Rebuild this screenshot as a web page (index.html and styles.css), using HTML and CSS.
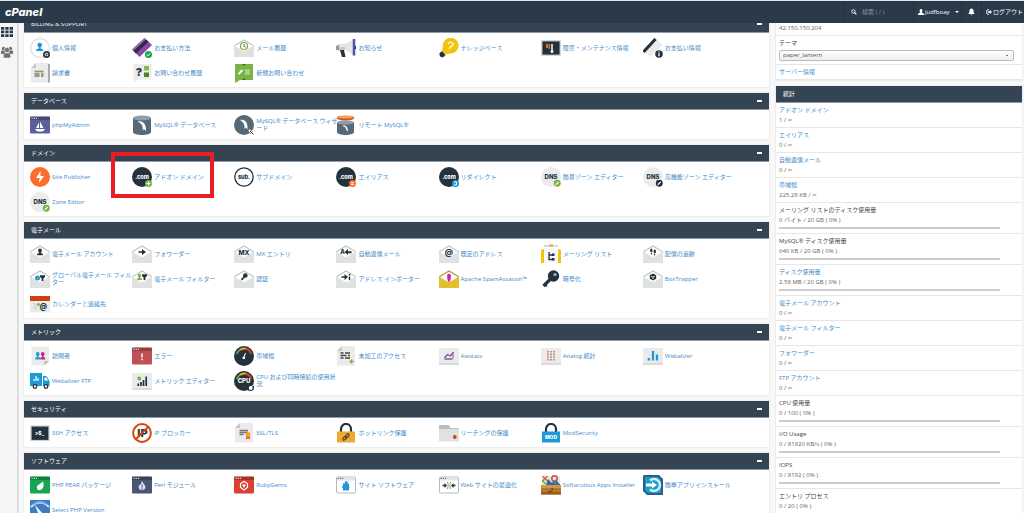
FILE: index.html
```html
<!DOCTYPE html>
<html lang="ja">
<head>
<meta charset="utf-8">
<title>cPanel</title>
<link rel="stylesheet" href="styles.css">
</head>
<body>
<svg class="defs" aria-hidden="true">
  <symbol id="env" viewBox="0 0 20 20">
    <path d="M.7 7.500 10 2l9.300 5.500V14H.7z" fill="#fff" stroke="#c3c5c4" stroke-width="1.200"/>
    <path d="M0 7.500 10 13.500 20 7.500V19H0z" fill="#e0e2e1"/>
  </symbol>
  <symbol id="page" viewBox="0 0 20 20">
    <path d="M6 0h13v19.500H1V5z" fill="#ebebeb"/><path d="M6 0v5H1z" fill="#c6c6c6"/>
  </symbol>
  <symbol id="disc" viewBox="0 0 20 20">
    <circle cx="10" cy="10" r="10"/>
  </symbol>
  <symbol id="pencil" viewBox="0 0 8 8">
    <circle cx="4" cy="4" r="3.700"/><path d="M2.400 5.600 5.500 2.500" stroke="#fff" stroke-width="1.300"/>
  </symbol>
  <symbol id="win" viewBox="0 0 20 20">
    <rect y="1.500" width="20" height="17" rx="1"/>
    <path d="M0 5h20V2.500a1 1 0 0 0-1-1H1a1 1 0 0 0-1 1z" fill="#000" opacity=".22"/>
    <path d="M1.500 3.300h6" stroke="#fff" stroke-width="1" stroke-dasharray="1.200 1"/>
  </symbol>
  <symbol id="tile" viewBox="0 0 20 20">
    <rect y="2" width="20" height="16.500" fill="#ebebeb"/><path d="M0 18h20" stroke="#cfcfcf" stroke-width="1.200"/>
  </symbol>
  <symbol id="gauge" viewBox="0 0 20 20">
    <circle cx="10" cy="10" r="10" fill="#24323d"/>
    <g fill="none" stroke-width="2"><path d="M2.800 8a7.500 7.500 0 0 1 3-4" stroke="#6a9d4c"/><path d="M5.800 4a7.500 7.500 0 0 1 6-1.300" stroke="#f0b12f"/><path d="M11.800 2.700A7.500 7.500 0 0 1 17.200 8" stroke="#d8420f"/></g>
  </symbol>
  <symbol id="db" viewBox="0 0 20 20">
    <path d="M1 3v14c0 4 18 4 18 0V3z" fill="#566976"/><ellipse cx="10" cy="3" rx="9" ry="2.600" fill="#8ba0ae"/>
    <path d="M5.500 6.500c5-1.500 9 2 8.500 9.500l-2-2-1.500 1.500c1-4-1-7.500-5-9z" fill="#fff"/>
  </symbol>
</svg>

<header class="topbar">
  <a class="logo" href="#">cPanel</a>
  <label class="search">
    <svg viewBox="0 0 10 10"><circle cx="4" cy="4" r="2.800" fill="none" stroke="#fff" stroke-width="1.500"/><path d="m6 6 3 3" stroke="#fff" stroke-width="1.800"/></svg>
    <input type="text" placeholder="検索 ( / )" aria-label="検索">
  </label>
  <button class="top-btn user"><svg viewBox="0 0 10 10"><path d="M5 0a2.500 2.800 0 0 1 1.500 5v1L10 8v2H0V8l3.500-2V5A2.500 2.800 0 0 1 5 0z"/></svg>judfboay<span class="caret"></span></button>
  <button class="top-btn bell" aria-label="通知"><svg viewBox="0 0 10 10"><path d="M5 0c3 .5 3 3 3 4.500C8 6 9 7 10 8H0c1-1 2-2 2-3.500C2 3 2 .5 5 0zM3.800 8.500h2.400L5 10z"/></svg></button>
  <a class="top-btn logout" href="#"><svg viewBox="0 0 10 10"><path d="M5 1.300H3.200A2 2 0 0 0 1.200 3.300v3.400a2 2 0 0 0 2 2H5" fill="none" stroke="#fff" stroke-width="1.500"/><path d="M3.500 3.700h3V1.500L10 5 6.500 8.500V6.300h-3z"/></svg>ログアウト</a>
</header>

<div class="shell">
  <nav class="rail">
    <a href="#" aria-label="ホーム"><svg viewBox="0 0 12 10"><path fill="#293a4a" d="M0 0h3.300v2.700H0zM4.300 0h3.300v2.700H4.300zM8.600 0H12v2.700H8.600zM0 3.600h3.300v2.700H0zM4.300 3.600h3.300v2.700H4.300zM8.600 3.600H12v2.700H8.600zM0 7.200h3.300V10H0zM4.300 7.200h3.300V10H4.300zM8.600 7.200H12V10H8.600z"/></svg></a>
    <a href="#" aria-label="ユーザー"><svg class="users" viewBox="0 0 12 12"><g fill="#707070"><circle cx="2.500" cy="2.500" r="1.700"/><circle cx="9.500" cy="2.500" r="1.700"/><path d="M0 8V5.500Q0 4.500 1 4.500h3V8zM8 8V4.500h3q1 0 1 1V8z"/></g><circle cx="6" cy="4" r="2.600" fill="#707070" stroke="#f5f5f5" stroke-width=".6"/><path d="M2.400 12V9q0-2 2-2h3.200q2 0 2 2v3z" fill="#707070" stroke="#f5f5f5" stroke-width=".5"/></svg></a>
  </nav>

  <main class="content">
    <div class="panels">
      <section class="panel">
        <h2>BILLING &amp; SUPPORT<button aria-label="折りたたむ"></button></h2>
        <div class="items">
          <a class="item" href="#"><svg viewBox="0 0 20 20"><circle cx="10" cy="10" r="9.300" fill="#fff" stroke="#ddd" stroke-width="1.200"/><circle cx="9.700" cy="7" r="2.300" fill="#1c9ad6"/><path d="M8.700 8h2v2.500l2.500 1V13H6.200v-1.500l2.500-1z" fill="#1c9ad6"/><circle cx="16.500" cy="16.500" r="3.500" fill="#24323d"/><circle cx="16.500" cy="16.500" r="1.300" fill="none" stroke="#fff"/></svg><span>個人情報</span></a>
          <a class="item" href="#"><svg viewBox="0 0 20 20"><path d="M0 11.500 12.500 0 20 7 7.500 19z" fill="#8c46a8"/><path d="M0 11.500 12.500 0l1 1L1 12.500z" fill="#a96ac0"/><path d="M1.500 13 14 1.500l2.500 2.300L4 15.500z" fill="#24323d"/><circle cx="16.500" cy="16.500" r="3.500" fill="#17a650"/><path d="m14.800 16.500 1.300 1.300 2-2.400" fill="none" stroke="#fff"/></svg><span>お支払い方法</span></a>
          <a class="item" href="#"><svg viewBox="0 0 20 20"><use href="#env"/><circle cx="10" cy="8" r="3.500" fill="#fff" stroke="#79ab45" stroke-width="1.200"/><path d="M10 6v2.300l1.700.7" fill="none" stroke="#4f7a2b"/></svg><span>メール履歴</span></a>
          <a class="item" href="#"><svg viewBox="0 0 20 20"><path d="M0 8 4 6v6.500L0 12z" fill="#999"/><path d="M3 6h6l8-4.500v15L9 12H3z" fill="#e5e5e5"/><path d="M3 9h6v3H3z" fill="#c9c9c9"/><path d="M4 12h4l1.500 7H6z" fill="#24323d"/><path d="M18 1v16.500" stroke="#4655ae" stroke-width="2.500"/><path d="M19.500 8v3" stroke="#24323d"/></svg><span>お知らせ</span></a>
          <a class="item" href="#"><svg viewBox="0 0 20 20"><path d="M6.500 16.500 3 12.500c1-2.500.5-4.500 1.200-7A7.800 7.800 0 1 1 14 15c-3 1-5 .3-7.500 1.500z" fill="#f2c40f"/><path d="M3 13 6.500 17l-2.500 2.500L1 18.500.3 15.500z" fill="#24323d"/><path d="M9 5.500q3-2.500 5 0 .8 2-2 3L10 11" fill="none" stroke="#fff2b0" stroke-width="1.700"/></svg><span>ナレッジベース</span></a>
          <a class="item" href="#"><svg viewBox="0 0 20 20"><rect x=".7" y="2.700" width="18.600" height="14.600" fill="#24323d" stroke="#d6d6d6" stroke-width="1.400"/><path d="M6 6v4" stroke="#e66c29" stroke-width="2"/><path d="M8.200 6v5" stroke="#f0b12f"/><path d="M11 6v7" stroke="#fff" stroke-width="1.500"/><circle cx="11" cy="13.500" r="1.500" fill="#fff"/></svg><span>障害・メンテナンス情報</span></a>
          <a class="item" href="#"><svg viewBox="0 0 20 20"><path d="M0 12 12 0l7.500 6.500L7.500 19z" fill="#ebebeb"/><path d="m.5 14 12-13" stroke="#24323d" stroke-width="3"/><circle cx="16" cy="16" r="3.800" fill="#24323d"/><path d="M16 13.500v1M16 15.300v3" stroke="#fff" stroke-width="1.300"/></svg><span>お支払い情報</span></a>
          <a class="item" href="#"><svg viewBox="0 0 20 20"><use href="#page"/><path d="M18 1h2v18.500h-2z" fill="#aaa"/><path d="M4.500 8.500h9" stroke="#79ab45" stroke-width="1.700"/><path d="M4.500 11h5M4.500 13h5M11 11h2.500M11 13h2.500" stroke="#444" stroke-width="1.200"/></svg><span>請求書</span></a>
          <a class="item" href="#"><svg viewBox="0 0 20 20"><path d="M1.500 1h18v15.500H6L1.500 20z" fill="#ebebeb"/><text x="7" y="12.500" class="glyph" fill="#24323d" font-size="11">?</text><path d="M12 3h5v4.500h-5z" fill="#86ba50"/><path d="M12 9.500h5V14h-5z" fill="#4e8420"/></svg><span>お問い合わせ履歴</span></a>
          <a class="item" href="#"><svg viewBox="0 0 20 20"><path d="M1 1h18v16H6l-5 3z" fill="#79b446"/><path d="M8 1h4l-2 2zM8 17h4l-2-2z" fill="#3f741d"/><path d="m4.500 11 4-4" stroke="#fff" stroke-width="1.800"/><path d="M11 7h5M11 9h5M11 11h5" stroke="#d4ebbf"/></svg><span>新規お問い合わせ</span></a>
        </div>
      </section>

      <section class="panel">
        <h2>データベース<button aria-label="折りたたむ"></button></h2>
        <div class="items">
          <a class="item" href="#"><svg viewBox="0 0 20 20"><use href="#win" fill="#5c5f99"/><path d="M9 7.500V13H6zM10 6.500l3.500 6.500H10zM5 14h10l-2 2.500H7z" fill="#fff"/></svg><span>phpMyAdmin</span></a>
          <a class="item" href="#"><svg viewBox="0 0 20 20"><use href="#db"/></svg><span>MySQL® データベース</span></a>
          <a class="item" href="#"><svg viewBox="0 0 20 20"><circle cx="10" cy="10" r="10" fill="#566976"/><path d="M6 5c5-1.500 8 2 7.500 9.500l-1.700-2-1.500 1.500c1-4-1-7-4.300-9z" fill="#fff"/><path d="m15 15 5 5M19.500 15.500l-3 3" stroke="#fff" stroke-width="2.200"/><path d="m16 16 3.500 3.500M18.500 16.500l-2 2" stroke="#24323d"/></svg><span>MySQL® データベース ウィザード</span></a>
          <a class="item" href="#"><svg viewBox="0 0 20 20"><path d="M1 7v10c0 4 17 4 17 0V7z" fill="#566976"/><ellipse cx="9.500" cy="7.500" rx="8.500" ry="2.200" fill="#8ba0ae"/><ellipse cx="9.500" cy="3" rx="8.700" ry="2.300" fill="#dc4c18"/><ellipse cx="9.500" cy="2" rx="8.700" ry="1.600" fill="#f2a356"/><path d="M7 10.500c3-.3 5 1.500 5 6l-2-2c0-2-1-3-3-3z" fill="#fff"/></svg><span>リモート MySQL®</span></a>
        </div>
      </section>

      <section class="panel">
        <h2>ドメイン<button aria-label="折りたたむ"></button></h2>
        <div class="items">
          <a class="item" href="#"><svg viewBox="0 0 20 20"><circle cx="10" cy="10" r="10" fill="#ff6c2c"/><path d="m10.500 4-4.500 7h3.500L9 16l5-7h-3.500z" fill="#fff"/></svg><span>Site Publisher</span></a>
          <a class="item marked" href="#"><svg viewBox="0 0 20 20"><use href="#disc" fill="#24323d"/><text x="10" y="11.800" class="glyph" fill="#fff" font-size="5.500">.com</text><circle cx="16.500" cy="16.500" r="3.500" fill="#7cb342"/><path d="M16.500 14.500v4M14.500 16.500h4" stroke="#fff"/></svg><span>アドオン ドメイン</span></a>
          <a class="item" href="#"><svg viewBox="0 0 20 20"><circle cx="10" cy="10" r="9.200" fill="#fff" stroke="#24323d" stroke-width="1.300"/><text x="10" y="12" class="glyph" fill="#24323d" font-size="5.500">sub.</text></svg><span>サブドメイン</span></a>
          <a class="item" href="#"><svg viewBox="0 0 20 20"><use href="#disc" fill="#24323d"/><text x="10" y="11.800" class="glyph" fill="#fff" font-size="5.500">.com</text><circle cx="16.500" cy="16.500" r="3.500" fill="#ff6c2c"/><path d="M15 15.700h3M15 17.400h3" stroke="#fff"/></svg><span>エイリアス</span></a>
          <a class="item" href="#"><svg viewBox="0 0 20 20"><use href="#disc" fill="#24323d"/><text x="10" y="11.800" class="glyph" fill="#fff" font-size="5.500">.com</text><circle cx="16.500" cy="16.500" r="3.500" fill="#1c9ad6"/><path d="M15 15h2.500v3H15" fill="none" stroke="#fff"/></svg><span>リダイレクト</span></a>
          <a class="item" href="#"><svg viewBox="0 0 20 20"><use href="#disc" fill="#ebebeb"/><text x="10" y="12" class="glyph" fill="#24323d" font-size="6">DNS</text><use href="#pencil" x="12.500" y="12.500" width="7.500" height="7.500" fill="#7cb342"/></svg><span>簡易ゾーン エディター</span></a>
          <a class="item" href="#"><svg viewBox="0 0 20 20"><use href="#disc" fill="#ebebeb"/><text x="10" y="12" class="glyph" fill="#24323d" font-size="6">DNS</text><use href="#pencil" x="12.500" y="12.500" width="7.500" height="7.500" fill="#24323d"/></svg><span>高機能ゾーン エディター</span></a>
          <a class="item" href="#"><svg viewBox="0 0 20 20"><use href="#disc" fill="#ebebeb"/><text x="10" y="12" class="glyph" fill="#24323d" font-size="6">DNS</text><use href="#pencil" x="12.500" y="12.500" width="7.500" height="7.500" fill="#7cb342"/></svg><span>Zone Editor</span></a>
        </div>
      </section>

      <section class="panel">
        <h2>電子メール<button aria-label="折りたたむ"></button></h2>
        <div class="items">
          <a class="item" href="#"><svg viewBox="0 0 20 20"><use href="#env"/><circle cx="10" cy="6.500" r="1.900" fill="#24323d"/><path d="M9 7h2v2l1.800.7v1.500H7.200V9.700L9 9z" fill="#24323d"/></svg><span>電子メール アカウント</span></a>
          <a class="item" href="#"><svg viewBox="0 0 20 20"><use href="#env"/><path d="M6.500 7.200H10V5l4 3-4 3V8.800H6.500z" fill="#24323d"/></svg><span>フォワーダー</span></a>
          <a class="item" href="#"><svg viewBox="0 0 20 20"><use href="#env"/><text x="10" y="10.500" class="glyph" fill="#24323d" font-size="6.500">MX</text></svg><span>MX エントリ</span></a>
          <a class="item" href="#"><svg viewBox="0 0 20 20"><use href="#env"/><text x="6.500" y="10.200" class="glyph" fill="#24323d" font-size="6">A</text><path d="m8.500 8 3.500-3v2.200h3.500v2H12V11z" fill="#24323d"/></svg><span>自動返信メール</span></a>
          <a class="item" href="#"><svg viewBox="0 0 20 20"><use href="#env"/><text x="10" y="10.500" class="glyph" fill="#24323d" font-size="8">@</text></svg><span>既定のアドレス</span></a>
          <a class="item" href="#"><svg viewBox="0 0 20 20"><path d="M0 7q0-2 3-2v14H0zM17 5q3 0 3 2v12h-3z" fill="#f2c40f"/><path d="M3 2h14" stroke="#ccc" stroke-width="1.500"/><path d="M8 1.500h4" stroke="#f0a42f" stroke-width="2"/><path d="M3 4h14v15H3z" fill="#f7f7f7"/><path d="M8 8v7.500h4M8 11h4" fill="none" stroke="#24323d" stroke-width="1.300"/><path d="M11 9.500h2.500v2.500H11zM11 14h2.500v2.500H11z" fill="#24323d"/></svg><span>メーリング リスト</span></a>
          <a class="item" href="#"><svg viewBox="0 0 20 20"><use href="#env"/><ellipse cx="8.300" cy="6.500" rx="1.200" ry="2" fill="#24323d"/><circle cx="8.500" cy="9.700" r=".8" fill="#24323d"/><ellipse cx="11.800" cy="7.500" rx="1.200" ry="2" fill="#24323d"/><circle cx="11.500" cy="10.700" r=".8" fill="#24323d"/></svg><span>配信の追跡</span></a>
          <a class="item" href="#"><svg viewBox="0 0 20 20"><use href="#env"/><circle cx="7.500" cy="9" r="2.500" fill="#1c9ad6"/><path d="M6.500 8q1.500-1 2 1l-1 2z" fill="#79b446"/><path d="M10 6.300h5V8l-1.600 1.500V12h-1.800V9.500L10 8z" fill="#24323d"/></svg><span>グローバル電子メール フィルター</span></a>
          <a class="item" href="#"><svg viewBox="0 0 20 20"><use href="#env"/><circle cx="7.500" cy="6.500" r="1.700" fill="#79b446"/><path d="M6.700 7h1.600v2l1.500.6V11H5.200V9.600L6.700 9z" fill="#79b446"/><path d="M10 5.300h5V7l-1.600 1.500V11h-1.800V8.500L10 7z" fill="#24323d"/></svg><span>電子メール フィルター</span></a>
          <a class="item" href="#"><svg viewBox="0 0 20 20"><use href="#env"/><circle cx="11.300" cy="6.500" r="2.300" fill="#24323d"/><path d="M10.500 7.500 7.500 11" stroke="#24323d" stroke-width="1.700"/></svg><span>認証</span></a>
          <a class="item" href="#"><svg viewBox="0 0 20 20"><use href="#env"/><path d="M5.500 7.200h3V5l3.500 3-3.500 3V8.800h-3z" fill="#24323d"/><path d="M13.500 5v1.500M13.500 7.500V11" stroke="#24323d" stroke-width="1.500"/></svg><span>アドレス インポーター</span></a>
          <a class="item" href="#"><svg viewBox="0 0 20 20"><path d="M.7 7.500 10 2l9.300 5.500V14H.7z" fill="#fff" stroke="#b5903a" stroke-width="1.200"/><path d="M0 7.500 10 13.500 20 7.500V19H0z" fill="#e2c02d"/><path d="m10 4.500 2 1.500-.5 5L10 13.500 8.500 11 8 6z" fill="#d6209b"/></svg><span>Apache SpamAssassin™</span></a>
          <a class="item" href="#"><svg viewBox="0 0 20 20"><circle cx="12.500" cy="7" r="5.700" fill="#24323d"/><circle cx="14" cy="5.500" r="1.600" fill="#aeb5ba"/><path d="m9.500 10-7 7" stroke="#24323d" stroke-width="3.200"/><path d="m4 15.500 2 2" stroke="#24323d" stroke-width="1.500"/></svg><span>暗号化</span></a>
          <a class="item" href="#"><svg viewBox="0 0 20 20"><use href="#env"/><path d="m10 4.500 3.200 1.800v3.500L10 11.600 6.800 9.800V6.300z" fill="#24323d"/><path d="m8 7.200 2 1 2-1M10 8.200v2" fill="none" stroke="#fff" stroke-width=".8"/></svg><span>BoxTrapper</span></a>
          <a class="item" href="#"><svg viewBox="0 0 20 20"><path d="M0 2h20v5H0z" fill="#cb420f"/><path d="M0 7h20v11.500H0z" fill="#ebebeb"/><path d="M4 9v7M6 10v6" stroke="#bbb" stroke-dasharray="1.300 1"/><circle cx="8.500" cy="10.500" r="1.500" fill="#79b446"/><text x="13.500" y="15" class="glyph" fill="#24323d" font-size="7">@</text></svg><span>カレンダーと連絡先</span></a>
        </div>
      </section>

      <section class="panel">
        <h2>メトリック<button aria-label="折りたたむ"></button></h2>
        <div class="items">
          <a class="item" href="#"><svg viewBox="0 0 20 20"><path d="M1.500.5H19V15l-4.500 4.500h-13z" fill="#ebebeb"/><path d="M14.500 19.500V15H19z" fill="#bbb"/><g fill="#1c9ad6"><circle cx="7.700" cy="8" r="1.900"/><path d="M7 9h1.500v2l1.700.7V13.500H5.300v-1.800L7 11z"/></g><g fill="#c8248c"><circle cx="12.700" cy="8" r="1.900"/><path d="M12 9h1.500v2l1.700.7V13.500h-4.900v-1.800L12 11z"/></g></svg><span>訪問者</span></a>
          <a class="item" href="#"><svg viewBox="0 0 20 20"><use href="#win" fill="#bf5053"/><path d="M10 7.500v4M10 12.800v1.500" stroke="#fff" stroke-width="1.500"/></svg><span>エラー</span></a>
          <a class="item" href="#"><svg viewBox="0 0 20 20"><use href="#gauge"/><circle cx="9.800" cy="11.800" r="1.400" fill="#fff"/><path d="m9.800 12 1.700-5" stroke="#fff"/></svg><span>帯域幅</span></a>
          <a class="item" href="#"><svg viewBox="0 0 20 20"><use href="#page"/><path d="M4.500 7h3M9 7h5M4.500 9.500h6M12 9.500h2M4.500 12h3M9 12h5" stroke="#444" stroke-width="1.300"/><path d="M15.500 13.500v4M13.500 15.500h4" stroke="#79b446" stroke-width="1.700"/></svg><span>未加工のアクセス</span></a>
          <a class="item" href="#"><svg viewBox="0 0 20 20"><use href="#tile"/><path d="M5.500 13h8" stroke="#24323d"/><path d="m5.500 12 3-3.500 3 1.500 3-4" fill="none" stroke="#8e3fa9" stroke-width="1.300"/><path d="M14 8v4.500" stroke="#8e3fa9"/></svg><span>Awstats</span></a>
          <a class="item" href="#"><svg viewBox="0 0 20 20"><use href="#tile"/><g fill="none" stroke-width="1.700" stroke-dasharray="1.600 1"><path d="M7 5v10" stroke="#ff6c2c"/><path d="M10 5v10" stroke="#58a7cf"/><path d="M13 5v10" stroke="#eb7750"/></g></svg><span>Analog 統計</span></a>
          <a class="item" href="#"><svg viewBox="0 0 20 20"><use href="#tile"/><path d="M5.800 12v2.500M10 5v9.500M14 8.500v6" stroke="#1c9ad6" stroke-width="2.300"/></svg><span>Webalizer</span></a>
          <a class="item" href="#"><svg viewBox="0 0 20 20"><path d="M0 2h12v13H0zM13 5h3.500L19.500 10v5H13z" fill="#1c9ad6"/><path d="M14.500 6.500h2l1.500 3h-3.500z" fill="#fff"/><path d="M4 8v2M6 5v5M8 7v3" stroke="#fff" stroke-width="1.200"/><circle cx="5" cy="15.500" r="1.800" fill="#fff" stroke="#24323d" stroke-width="1.300"/><circle cx="16" cy="15.500" r="1.800" fill="#fff" stroke="#24323d" stroke-width="1.300"/></svg><span>Webalizer FTP</span></a>
          <a class="item" href="#"><svg viewBox="0 0 20 20"><use href="#tile"/><circle cx="7.300" cy="7.500" r="2" fill="#79b446"/><path d="M6.300 12.500V15M9 11v4M11.500 9v6M14.200 5.500V15" stroke="#24323d" stroke-width="1.700"/></svg><span>メトリック エディター</span></a>
          <a class="item" href="#"><svg viewBox="0 0 20 20"><use href="#gauge"/><text x="10" y="12.300" class="glyph" fill="#fff" font-size="6">CPU</text><circle cx="16.500" cy="16.500" r="3.500" fill="#24323d"/><circle cx="16.700" cy="17" r="1.900" fill="#fff"/><path d="m17 16 2.500-2" stroke="#fff"/></svg><span>CPU および同時接続の使用状況</span></a>
        </div>
      </section>

      <section class="panel">
        <h2>セキュリティ<button aria-label="折りたたむ"></button></h2>
        <div class="items">
          <a class="item" href="#"><svg viewBox="0 0 20 20"><rect x="1" y="3" width="18" height="14.500" fill="#24323d" stroke="#d0d0d0" stroke-width="1.200"/><text x="9.500" y="12" class="glyph" fill="#fff" font-size="5">&gt;$_</text></svg><span>SSH アクセス</span></a>
          <a class="item" href="#"><svg viewBox="0 0 20 20"><text x="10.500" y="14" class="glyph" fill="#24323d" font-size="11">IP</text><circle cx="10" cy="10" r="8.900" fill="none" stroke="#d8480f" stroke-width="2"/><path d="M16 4 4 16" stroke="#d8480f" stroke-width="2"/></svg><span>IP ブロッカー</span></a>
          <a class="item" href="#"><svg viewBox="0 0 20 20"><use href="#page"/><path d="M5.500 7.500h8.500M5.500 9.500h8.500M5.500 11.500h4" stroke="#777" stroke-width="1.300"/><path d="M12 11h4v5.500l-2-1-2 1z" fill="#e8642b"/><circle cx="14" cy="11.500" r="2.400" fill="#f0a92f"/></svg><span>SSL/TLS</span></a>
          <a class="item" href="#"><svg viewBox="0 0 20 20"><path d="M5 10V6a5 5 0 0 1 10 0v4" fill="none" stroke="#24323d" stroke-width="2.200"/><path d="M1 8.500h18V19.500H1z" fill="#f0a92f"/><g fill="none" stroke="#24323d"><ellipse cx="8.700" cy="15.300" rx="1.300" ry="2.200" transform="rotate(45 8.700 15.300)"/><ellipse cx="11.300" cy="12.700" rx="1.300" ry="2.200" transform="rotate(45 11.300 12.700)"/></g></svg><span>ホットリンク保護</span></a>
          <a class="item" href="#"><svg viewBox="0 0 20 20"><path d="M0 2h10l1.500 3H20v5H0z" fill="#bdbdbd"/><path d="M0 6h20v12.500H0z" fill="#e0e2e1"/><circle cx="15.800" cy="14" r="1.900" fill="#d8420f"/></svg><span>リーチングの保護</span></a>
          <a class="item" href="#"><svg viewBox="0 0 20 20"><path d="M5 9V6a5 5 0 0 1 10 0v3" fill="none" stroke="#24323d" stroke-width="2.200"/><path d="M1 8.500h18V19.500H1z" fill="#1c9ad6"/><text x="10" y="15.800" class="glyph" fill="#fff" font-size="5">MOD</text></svg><span>ModSecurity</span></a>
        </div>
      </section>

      <section class="panel">
        <h2>ソフトウェア<button aria-label="折りたたむ"></button></h2>
        <div class="items">
          <a class="item" href="#"><svg viewBox="0 0 20 20"><use href="#win" fill="#17a650"/><path d="M13 6.500q1.500 4-.5 7-2.500 3-5 1-2-3 1.500-5z" fill="#fff"/></svg><span>PHP PEAR パッケージ</span></a>
          <a class="item" href="#"><svg viewBox="0 0 20 20"><use href="#win" fill="#485573"/><path d="M10 6q1 2 3 4.500 1.500 4-3 4.800Q5.500 14.500 7 10.500 9.500 9 10 6z" fill="#dce1ee"/><path d="M10 9v6" stroke="#485573" stroke-width=".8"/></svg><span>Perl モジュール</span></a>
          <a class="item" href="#"><svg viewBox="0 0 20 20"><use href="#win" fill="#d94032"/><path d="m10 6.500 3.500 2v4L10 15l-3.500-2.500v-4z" fill="none" stroke="#fff" stroke-width="1.200"/><path d="M8 9.500h4l-2 3.500z" fill="#fff"/></svg><span>RubyGems</span></a>
          <a class="item" href="#"><svg viewBox="0 0 20 20"><rect x=".5" y="2" width="19" height="16" rx="1" fill="#fff" stroke="#bbb"/><path d="M1 4h18" stroke="#e5e5e5" stroke-width="3"/><path d="M1.500 3.300h6" stroke="#444" stroke-dasharray="1.200 1"/><path d="M7 8.500h2a1.500 1.500 0 1 1 2.500 0H13v3a1.300 1.300 0 0 1 0 2V15.500H7v-2.500a1 1 0 0 1 0-2z" fill="#1c9ad6"/></svg><span>サイト ソフトウェア</span></a>
          <a class="item" href="#"><svg viewBox="0 0 20 20"><rect x=".5" y="2" width="19" height="16" rx="1" fill="#fff" stroke="#bbb"/><path d="M1 4h18" stroke="#e5e5e5" stroke-width="3"/><path d="M1.500 3.300h6" stroke="#444" stroke-dasharray="1.200 1"/><path d="M8.500 7q1.500 3.500 0 7M11.500 7q-1.500 3.500 0 7" fill="none" stroke="#79b446"/><path d="M3.500 10.500H7M16.500 10.500H13" stroke="#24323d" stroke-width="1.300"/><path d="m5.500 8 2.500 2.500L5.500 13zM14.500 8 12 10.500l2.500 2.500z" fill="#24323d"/></svg><span>Web サイトの最適化</span></a>
          <a class="item" href="#"><svg viewBox="0 0 20 20"><path d="M1 1h18v9H1z" fill="#dfe5ea"/><path d="m1.500 1 5 5M6.500 1l-5 5" stroke="#e06b32" stroke-width="1.600"/><path d="M1 5.500 5 9M16 4l-3 5" stroke="#7cae3a" stroke-width="1.500"/><circle cx="13.500" cy="3.500" r="2.700" fill="none" stroke="#d84e3d" stroke-width="1.500"/><path d="m5 10 2-6 4 4 2-3 1 5zM15 5l4.500 5H14z" fill="#2a6ba5"/><path d="M0 10h20v9.500H0z" fill="#b5752f"/><path d="M0 10h20v3H0z" fill="#d49545"/><path d="M0 17h20v2.500H0z" fill="#9a5d20"/><path d="M11 13q1 4-4 4" fill="none" stroke="#543212"/></svg><span>Softaculous Apps Installer</span></a>
          <a class="item" href="#"><svg viewBox="0 0 20 20"><path d="M1 0h15l4 4v16H4l-4-4V1z" fill="#2b5f8a"/><path d="M2 2h13l3 3v13H5l-3-3z" fill="#1a9cc4"/><path d="M7 5.500a6 6 0 1 1 0 9" fill="none" stroke="#c7f2fa" stroke-width="2.500"/><path d="M3 8.500h6V6.500l5 3.500-5 3.500v-2H3z" fill="#fff"/></svg><span>簡単アプリインストール</span></a>
          <a class="item" href="#"><svg viewBox="0 0 20 20"><path d="M0 0h20v20H0z" fill="#3e7dc4"/><path d="M1 7Q10-2 19 7" fill="none" stroke="#d9e8f7" stroke-width="1.800"/><path d="M3 4.500Q10-1 17 4.500" fill="none" stroke="#76a8dc" stroke-width="1.500"/><path d="m5 5 8 9-3 4z" fill="#fff"/></svg><span>Select PHP Version</span></a>
        </div>
      </section>
    </div>

    <aside class="side">
      <section class="card">
        <div class="row first">42.150.150.204</div>
        <div class="row theme"><label for="theme">テーマ</label><select id="theme"><option>paper_lantern</option></select></div>
        <div class="row"><a href="#">サーバー情報</a></div>
      </section>
      <section class="card stats">
        <h2>統計</h2>
        <div class="row"><a href="#">アドオン ドメイン</a><span>1 / ∞</span></div>
        <div class="row"><a href="#">エイリアス</a><span>0 / ∞</span></div>
        <div class="row"><a href="#">自動返信メール</a><span>0 / ∞</span></div>
        <div class="row"><a href="#">帯域幅</a><span>225.28 KB / ∞</span></div>
        <div class="row"><b>メーリング リストのディスク使用量</b><span>0 バイト / 20 GB ( 0% )</span><div class="meter"></div></div>
        <div class="row"><b>MySQL® ディスク使用量</b><span>640 KB / 20 GB ( 0% )</span><div class="meter"></div></div>
        <div class="row"><a href="#">ディスク使用量</a><span>2.58 MB / 20 GB ( 0% )</span><div class="meter"></div></div>
        <div class="row"><a href="#">電子メール アカウント</a><span>0 / ∞</span></div>
        <div class="row"><a href="#">電子メール フィルター</a><span>0 / ∞</span></div>
        <div class="row"><a href="#">フォワーダー</a><span>0 / ∞</span></div>
        <div class="row"><a href="#">FTP アカウント</a><span>0 / ∞</span></div>
        <div class="row"><b>CPU 使用量</b><span>0 / 100 ( 0% )</span><div class="meter"></div></div>
        <div class="row"><b>I/O Usage</b><span>0 / 81920 KB/s ( 0% )</span><div class="meter"></div></div>
        <div class="row"><b>IOPS</b><span>0 / 8192 ( 0% )</span><div class="meter"></div></div>
        <div class="row"><b>エントリ プロセス</b><span>0 / 20 ( 0% )</span><div class="meter"></div></div>
      </section>
    </aside>
  </main>
</div>
</body>
</html>
```
FILE: styles.css
```css
* {
  box-sizing: border-box;
}

body {
  margin: 0;
  height: 100vh;
  display: flex;
  flex-direction: column;
  overflow: hidden;
  background: #f8f8f8;
  color: #666;
  font: 6px/10px "Open Sans", "Noto Sans CJK JP", sans-serif;
}

a {
  color: #428bca;
  text-decoration: none;
}

button,
input,
select {
  font: inherit;
  border: 0;
  margin: 0;
}

svg {
  display: block;
  flex: none;
}

.defs {
  position: absolute;
  width: 0;
  height: 0;
}

.glyph {
  font-family: Inter, "Open Sans", sans-serif;
  font-weight: 800;
  text-anchor: middle;
}

.topbar {
  flex: none;
  display: flex;
  height: 23px;
  border-top: 1px solid #e4e8ea;
  background: #293a4a;
  color: #fff;
}

.logo {
  margin-right: auto;
  padding-left: 5px;
  color: #fff;
  font: italic 800 11px/23px Inter, sans-serif;
}

.search {
  display: flex;
  align-items: center;
  gap: 5px;
  width: 70px;
  padding-left: 7px;
  border-left: 1px solid #243341;
}

.search svg {
  width: 6px;
  height: 6px;
}

.search input {
  width: 48px;
  padding: 0;
  background: transparent;
  color: #fff;
  outline: 0;
}

.search input::placeholder {
  color: #8996a2;
}

.top-btn {
  display: flex;
  align-items: center;
  gap: 1px;
  padding: 0;
  border-left: 1px solid #243341;
  background: transparent;
  color: #fff;
  white-space: nowrap;
}

.top-btn svg {
  width: 6px;
  height: 6px;
  fill: #fff;
}

.user {
  width: 48px;
  padding-left: 4px;
}

.caret {
  margin-left: 4px;
  border: 2px solid transparent;
  border-top-color: #fff;
  border-bottom: 0;
}

.bell {
  width: 20px;
  justify-content: center;
}

.bell svg {
  width: 7px;
  height: 8px;
}

.logout {
  padding: 0 1px 0 4px;
}

.shell {
  flex: 1;
  min-height: 0;
  display: flex;
}

.rail {
  flex: none;
  display: flex;
  flex-direction: column;
  align-items: center;
  gap: 9px;
  width: 19px;
  padding-top: 4px;
  padding-right: 3px;
  border-right: 2px solid #ddd;
  background: #f5f5f5;
}

.rail svg {
  width: 12px;
  height: 10px;
}

.rail .users {
  height: 12px;
}

.content {
  flex: 1;
  min-width: 0;
  display: grid;
  grid-template-columns: minmax(0, 1fr) 246px;
  gap: 7px;
  padding: 0 2px 0 5px;
  overflow: hidden;
}

.panels,
.side {
  display: flex;
  flex-direction: column;
  gap: 6px;
  margin-top: -7px;
}

h2 {
  display: flex;
  align-items: center;
  justify-content: space-between;
  height: 17px;
  margin: 0;
  padding: 0 7px;
  border-bottom: 1px solid #8e9aa5;
  background: #344452;
  color: #fff;
  font-size: 6px;
  font-weight: 400;
}

.panel {
  flex: none;
  background: #fff;
  box-shadow: 0 0 1px 1px #eee;
}

.panel h2 button {
  width: 5px;
  height: 2px;
  padding: 0;
  background: #fff;
}

.items {
  display: grid;
  grid-template-columns: repeat(7, minmax(0, 1fr));
  row-gap: 1px;
  padding: 3px 24px 2px 6px;
}

.item {
  position: relative;
  display: flex;
  align-items: center;
  gap: 2px;
  height: 24px;
  line-height: 7px;
}

.item svg {
  width: 20px;
  height: 20px;
}

.item span {
  margin-right: -3px;
}

.marked::after {
  content: "";
  position: absolute;
  inset: -13px 20px -9px -21px;
  border: 4px solid #ed1c24;
}

.card {
  flex: none;
  background: #fff;
  box-shadow: 0 0 1px 1px #eee;
}

.row {
  display: flex;
  flex-direction: column;
  padding: 2px 8px 2px 3px;
  border-bottom: 1px solid #e6e6e6;
}

.row b {
  font-weight: 400;
  color: #444;
}

.row.first {
  padding-top: 7px;
}

.theme {
  color: #333;
}

.theme select {
  height: 11px;
  margin: 2px 0 1px;
  padding: 0 3px;
  appearance: none;
  border: 1px solid #bbb;
  border-radius: 2px;
  background:
    linear-gradient(#777, #777) right 5px center / 2px 1px no-repeat,
    linear-gradient(#fff, #eee);
  color: #555;
  line-height: 9px;
}

.meter {
  width: 94%;
  height: 2px;
  margin: 2px 0;
  background: #ccc;
}
```
